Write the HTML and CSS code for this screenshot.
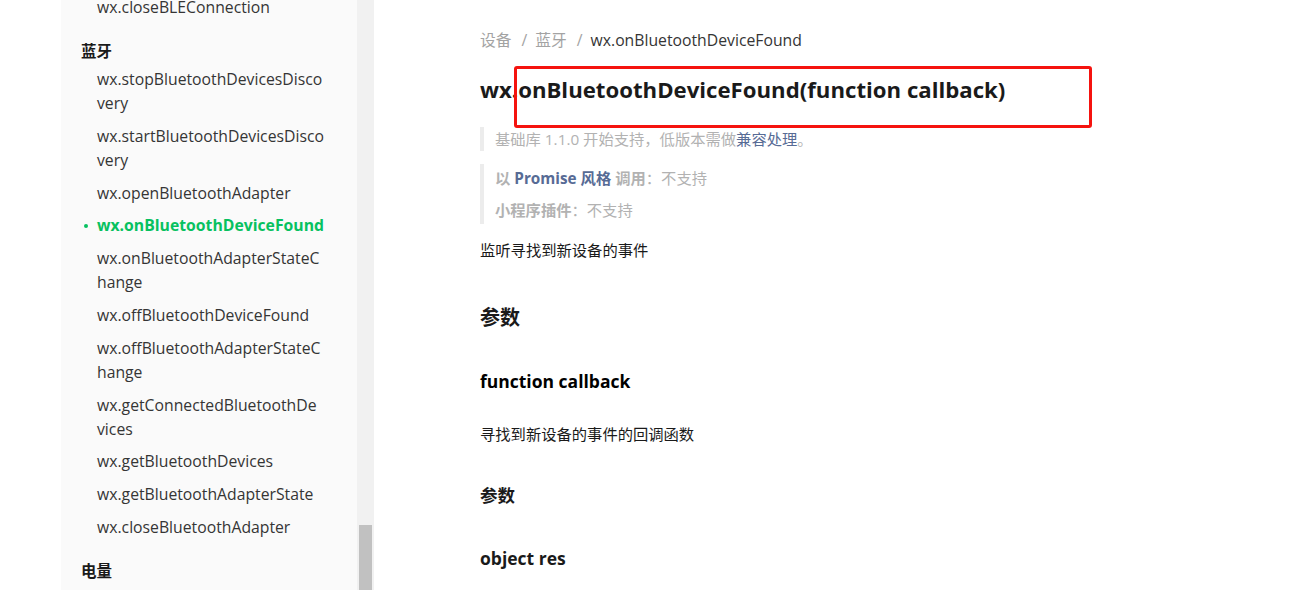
FILE: index.html
```html
<!DOCTYPE html>
<html lang="zh-CN">
<head>
<meta charset="utf-8">
<link rel="stylesheet" href="styles.css">
</head>
<body>
<div class="page">
  <div class="gutter"></div>
  <aside class="sidebar">
    <div class="nav">
      <div class="item prev">wx.closeBLEConnection</div>
      <div class="group">蓝牙</div>
      <div class="item">wx.stopBluetoothDevicesDisco<br>very</div>
      <div class="item">wx.startBluetoothDevicesDisco<br>very</div>
      <div class="item">wx.openBluetoothAdapter</div>
      <div class="item active">wx.onBluetoothDeviceFound</div>
      <div class="item">wx.onBluetoothAdapterStateC<br>hange</div>
      <div class="item">wx.offBluetoothDeviceFound</div>
      <div class="item">wx.offBluetoothAdapterStateC<br>hange</div>
      <div class="item">wx.getConnectedBluetoothDe<br>vices</div>
      <div class="item">wx.getBluetoothDevices</div>
      <div class="item">wx.getBluetoothAdapterState</div>
      <div class="item">wx.closeBluetoothAdapter</div>
      <div class="group">电量</div>
    </div>
  </aside>
  <div class="scrolltrack"><div class="thumb"></div></div>
  <main class="content">
    <nav class="crumbs">
      <span class="crumb">设备</span><span class="sep">/</span><span class="crumb">蓝牙</span><span class="sep">/</span><span class="crumb cur">wx.onBluetoothDeviceFound</span>
    </nav>
    <div class="titlewrap">
      <h1 class="title">wx.onBluetoothDeviceFound(function callback)</h1>
      <div class="mark"></div>
    </div>
    <blockquote class="note one">基础库 1.1.0 开始支持，低版本需做<span class="link">兼容处理</span>。</blockquote>
    <blockquote class="note two">
      <p><b>以 <span class="link">Promise 风格</span> 调用</b>：不支持</p>
      <p><b>小程序插件</b>：不支持</p>
    </blockquote>
    <p class="desc">监听寻找到新设备的事件</p>
    <h2 class="h2">参数</h2>
    <h3 class="h3">function callback</h3>
    <p class="desc second">寻找到新设备的事件的回调函数</p>
    <h4 class="h4">参数</h4>
    <h4 class="h4 obj">object res</h4>
  </main>
</div>
</body>
</html>
```

FILE: styles.css
```css
* { box-sizing: border-box; }
html, body { margin: 0; padding: 0; background: #fff; }
body {
  font-family: "Open Sans", "Noto Sans CJK SC", sans-serif;
  color: #353535;
  height: 590px;
  overflow: hidden;
}
.page { display: flex; height: 590px; }
.gutter { width: 61px; flex: none; background: #fff; }
.sidebar {
  width: 296px; flex: none; background: #fafafa; overflow: hidden;
}
.nav { margin-top: -5px; padding-left: 20px; }
.item {
  font-size: 15.75px; line-height: 24px; padding-left: 16px; margin-bottom: 8.8px;
  color: #353535; position: relative; white-space: nowrap;
}
.item.prev { margin-bottom: 19px; }
.item.active { color: #07c160; font-weight: 700; }
.item.active::before {
  content: ""; position: absolute; left: 3px; top: 11px; width: 4px; height: 4px;
  border-radius: 50%; background: #07c160;
}
.group {
  font-size: 15.5px; line-height: 24px; font-weight: 700; color: #1a1a1a; margin-bottom: 4px;
}
.item + .group { margin-top: 20px; }
.scrolltrack {
  width: 17px; flex: none; background: #f1f1f1; padding: 525px 2px 0 2px;
}
.thumb { height: 80px; background: #c1c1c1; }
.content { flex: 1; padding-left: 106px; padding-top: 30px; }
.crumbs { font-size: 15.75px; line-height: 20px; color: #a3a3a3; }
.sep { margin: 0 8px 0 10px; color: #a3a3a3; }
.crumb.cur { color: #353535; }
.titlewrap { position: relative; margin-top: 24px; }
.title { margin: 0; font-size: 22.2px; line-height: 32px; font-weight: 700; color: #1a1a1a; }
.mark {
  position: absolute; left: 34px; top: -8px; width: 578px; height: 62px;
  border: 3px solid #f5130f; border-radius: 3px;
}
.note {
  margin: 0; border-left: 4px solid #ececec; padding-left: 11px; color: #b2b2b2; font-size: 15.3px;
}
.note.one { margin-top: 21px; line-height: 24px; }
.note.two { margin-top: 13px; }
.note p { margin: 0; line-height: 28px; }
.note p + p { margin-top: 4px; }
.note b { font-weight: 700; color: #b2b2b2; }
.link { color: #576b95; }
.desc { margin: 14px 0 0; font-size: 15.3px; line-height: 24px; color: #1a1a1a; }
.h2 { margin: 40px 0 0; font-size: 20px; line-height: 32px; font-weight: 700; color: #1a1a1a; }
.h3 { margin: 31px 0 0; font-size: 17.5px; line-height: 32px; font-weight: 700; color: #000; }
.desc.second { margin-top: 25px; }
.h4 { margin: 33px 0 0; font-size: 17.5px; line-height: 32px; font-weight: 700; color: #1a1a1a; }
.h4.obj { margin-top: 31px; }
```
